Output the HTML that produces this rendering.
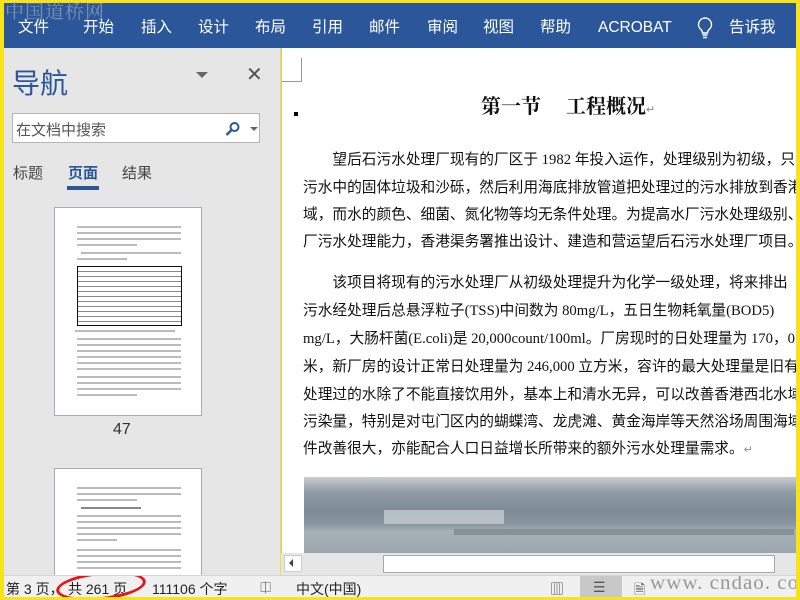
<!DOCTYPE html>
<html><head><meta charset="utf-8"><style>
*{margin:0;padding:0;box-sizing:border-box}
html,body{width:800px;height:600px;overflow:hidden}
body{background:#f8e21a;position:relative;font-family:"Liberation Sans","Noto Sans CJK SC",sans-serif}
.abs{position:absolute}
#rib{left:4px;top:3px;width:792px;height:45px;background:#2b579a;color:#fff;font-size:15.5px}
#rib span{position:absolute;top:15px;line-height:19px;white-space:nowrap}
#wm{left:5px;top:0;font-size:19px;color:#8a9bb4;letter-spacing:1px;font-family:"Noto Serif CJK SC",serif;opacity:.85;white-space:nowrap;line-height:22px}
#nav{left:4px;top:48px;width:276px;height:527px;background:#e6e6e6}
#doc{left:281px;top:48px;width:515px;height:505px;background:#fff;border-left:1px solid #c6c6c6;overflow:hidden}
.p{position:absolute;left:21px;white-space:nowrap;font-family:"Liberation Serif","Noto Sans CJK SC",serif;font-size:14.7px;color:#111;line-height:20px}
#status{left:4px;top:575px;width:792px;height:22px;background:#f0f0f0;border-top:1px solid #d4d4d4;font-size:14px;color:#222;overflow:hidden}
#status span{position:absolute;top:3px;white-space:nowrap}
.thumb{position:absolute;left:50px;width:148px;background:#fff;border:1px solid #a9adb3}
.tl{position:absolute;height:2px;background:#bbb}
</style></head><body>
<div class="abs" id="rib">
<span style="left:14px">文件</span><span style="left:79px">开始</span><span style="left:137px">插入</span><span style="left:194px">设计</span><span style="left:251px">布局</span><span style="left:308px">引用</span><span style="left:365px">邮件</span><span style="left:423px">审阅</span><span style="left:479px">视图</span><span style="left:536px">帮助</span><span style="left:594px">ACROBAT</span>
<svg style="position:absolute;left:693px;top:14px" width="16" height="24" viewBox="0 0 16 24"><path d="M8 1a6.5 6.5 0 0 0-4 11.6c1 1 1.5 2 1.5 3.4h5c0-1.4.5-2.4 1.5-3.4A6.5 6.5 0 0 0 8 1z" fill="none" stroke="#fff" stroke-width="1.4"/><path d="M5.5 18h5M6 20.5h4" stroke="#fff" stroke-width="1.4"/></svg>
<span style="left:725px">告诉我</span>
</div>
<div class="abs" id="wm">中国道桥网</div>
<div class="abs" id="nav">
<div class="abs" style="left:8px;top:14px;font-size:28px;color:#2b579a">导航</div>
<div class="abs" style="left:192px;top:24px;width:0;height:0;border-left:6px solid transparent;border-right:6px solid transparent;border-top:6px solid #666"></div>
<div class="abs" style="left:242px;top:14px;font-size:20px;color:#555">✕</div>
<div class="abs" style="left:8px;top:65px;width:248px;height:30px;background:#fff;border:1px solid #b5b5b5;font-size:15px;color:#555;padding:5px 0 0 3px">在文档中搜索
<svg style="position:absolute;left:212px;top:7px" width="16" height="16" viewBox="0 0 16 16"><circle cx="9.5" cy="6" r="4" fill="none" stroke="#2b579a" stroke-width="2"/><path d="M6.5 9l-5 5" stroke="#2b579a" stroke-width="2.4"/></svg>
<div class="abs" style="left:237px;top:13px;border-left:4px solid transparent;border-right:4px solid transparent;border-top:4px solid #666"></div>
</div>
<div class="abs" style="left:9px;top:114px;font-size:15px;color:#444">标题</div>
<div class="abs" style="left:64px;top:114px;font-size:15px;color:#2b579a;font-weight:bold">页面</div>
<div class="abs" style="left:63px;top:138px;width:32px;height:4px;background:#2b579a"></div>
<div class="abs" style="left:118px;top:114px;font-size:15px;color:#444">结果</div>
<div class="thumb" style="top:159px;height:209px">
<div class="tl" style="left:22px;top:18px;width:104px"></div><div class="tl" style="left:22px;top:24px;width:104px"></div><div class="tl" style="left:22px;top:30px;width:104px"></div><div class="tl" style="left:22px;top:36px;width:60px"></div>
<div class="tl" style="left:26px;top:44px;width:100px"></div><div class="tl" style="left:22px;top:50px;width:50px"></div>
<div style="position:absolute;left:22px;top:58px;width:105px;height:60px;border:1.5px solid #111;background:repeating-linear-gradient(#fff 0 4px,#888 4px 5px)"></div>
<div class="tl" style="left:20px;top:122px;width:100px"></div>
<div class="tl" style="left:22px;top:130px;width:104px"></div><div class="tl" style="left:22px;top:136px;width:104px"></div><div class="tl" style="left:22px;top:142px;width:104px"></div><div class="tl" style="left:22px;top:148px;width:104px"></div><div class="tl" style="left:22px;top:154px;width:104px"></div><div class="tl" style="left:22px;top:160px;width:104px"></div>
<div class="tl" style="left:22px;top:168px;width:104px"></div><div class="tl" style="left:22px;top:174px;width:104px"></div><div class="tl" style="left:22px;top:180px;width:104px"></div><div class="tl" style="left:22px;top:186px;width:60px"></div>
</div>
<div class="abs" style="left:109px;top:373px;font-size:16px;color:#333">47</div>
<div class="thumb" style="top:420px;height:120px;border-bottom:none">
<div class="tl" style="left:22px;top:18px;width:104px"></div><div class="tl" style="left:22px;top:24px;width:104px"></div><div class="tl" style="left:22px;top:30px;width:60px"></div>
<div class="tl" style="left:26px;top:38px;width:60px;background:#888"></div>
<div class="tl" style="left:22px;top:46px;width:104px"></div><div class="tl" style="left:22px;top:52px;width:104px"></div><div class="tl" style="left:22px;top:58px;width:104px"></div><div class="tl" style="left:22px;top:64px;width:104px"></div><div class="tl" style="left:22px;top:70px;width:40px"></div>
<div class="tl" style="left:22px;top:80px;width:104px"></div><div class="tl" style="left:22px;top:86px;width:104px"></div><div class="tl" style="left:22px;top:92px;width:104px"></div><div class="tl" style="left:22px;top:98px;width:104px"></div>
</div>
</div>
<div class="abs" id="doc">
<div class="abs" style="left:0;top:10px;width:20px;height:24px;border-right:1px solid #999;border-bottom:1px solid #999"></div>
<div class="abs" style="left:12px;top:64px;width:4px;height:4px;background:#000"></div>
<div class="p" style="left:199px;top:47px;font-size:20px;font-weight:bold;font-family:'Noto Serif CJK SC',serif">第一节　  工程概况<span style="font-size:11px;color:#888;font-weight:normal">↵</span></div>
<div class="p" style="top:102px">　　望后石污水处理厂现有的厂区于 1982 年投入运作，处理级别为初级，只</div>
<div class="p" style="top:130px">污水中的固体垃圾和沙砾，然后利用海底排放管道把处理过的污水排放到香港</div>
<div class="p" style="top:157px">域，而水的颜色、细菌、氮化物等均无条件处理。为提高水厂污水处理级别、</div>
<div class="p" style="top:184px">厂污水处理能力，香港渠务署推出设计、建造和营运望后石污水处理厂项目。</div>
<div class="p" style="top:225px">　　该项目将现有的污水处理厂从初级处理提升为化学一级处理，将来排出</div>
<div class="p" style="top:253px">污水经处理后总悬浮粒子(TSS)中间数为  80mg/L，五日生物耗氧量(BOD5)</div>
<div class="p" style="top:281px">mg/L，大肠杆菌(E.coli)是 20,000count/100ml。厂房现时的日处理量为 170，0</div>
<div class="p" style="top:309px">米，新厂房的设计正常日处理量为 246,000 立方米，容许的最大处理量是旧有</div>
<div class="p" style="top:337px">处理过的水除了不能直接饮用外，基本上和清水无异，可以改善香港西北水域</div>
<div class="p" style="top:364px">污染量，特别是对屯门区内的蝴蝶湾、龙虎滩、黄金海岸等天然浴场周围海域</div>
<div class="p" style="top:391px">件改善很大，亦能配合人口日益增长所带来的额外污水处理量需求。<span style="font-size:11px;color:#888">↵</span></div>
<div class="abs" style="left:22px;top:429px;width:494px;height:76px;background:linear-gradient(180deg,#c8cdd0 0%,#8f9ba6 20%,#7d8b97 45%,#8a96a0 62%,#a7b1b7 72%,#9aa5ad 100%)">
<div class="abs" style="left:80px;top:33px;width:120px;height:14px;background:#c5ccd2;opacity:.8"></div>
<div class="abs" style="left:150px;top:52px;width:340px;height:6px;background:#6f7b83;opacity:.6"></div>
</div>
</div>
<div class="abs" style="left:281px;top:553px;width:515px;height:22px;background:#e6e6e6">
<div class="abs" style="left:3px;top:2px;width:18px;height:17px;background:#fff;border:1px solid #ccc"></div>
<div class="abs" style="left:8px;top:6px;border-top:4px solid transparent;border-bottom:4px solid transparent;border-right:4px solid #444"></div>
<div class="abs" style="left:102px;top:2px;width:392px;height:18px;background:#fff;border:1px solid #aaa"></div>
</div>
<div class="abs" id="status">
<span style="left:2px">第 3 页，</span><span style="left:64px">共 261 页</span><span style="left:148px">111106 个字</span><span style="left:256px;color:#555">⎅</span><span style="left:292px">中文(中国)</span>
<div class="abs" style="left:52px;top:-4px;width:90px;height:28px;border:3px solid #e8141c;border-radius:50%;transform:rotate(-6deg)"></div>
<div class="abs" style="left:576px;top:0;width:42px;height:22px;background:#c8c8c8"></div>
<span style="left:546px;color:#555">▥</span><span style="left:589px;color:#555">☰</span><span style="left:630px;color:#555">🗎</span>
<span style="left:646px;top:-6px;font-family:'Liberation Serif',serif;font-size:21px;color:#999;letter-spacing:1px">www. cndao. com</span>
</div>
</body></html>
